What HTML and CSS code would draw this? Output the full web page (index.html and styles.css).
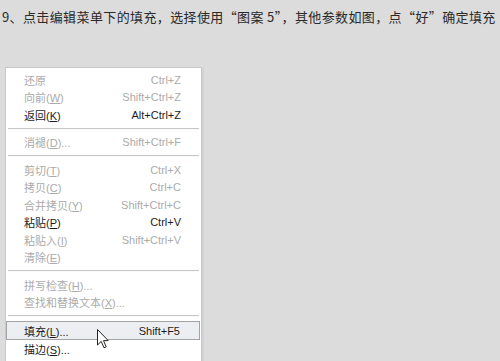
FILE: index.html
```html
<!DOCTYPE html>
<html lang="zh-CN">
<head>
    <meta charset="UTF-8">
    <meta name="viewport" content="width=device-width, initial-scale=1.0">
    <title>填充</title>
    <link rel="stylesheet" href="styles.css">
</head>
<body>
    <p class="step">9、点击编辑菜单下的填充，选择使用“图案 5”，其他参数如图，点“好”确定填充</p>

    <div class="menu">
        <div class="item off"><span>还原</span><span class="key">Ctrl+Z</span></div>
        <div class="item off"><span>向前(<u>W</u>)</span><span class="key">Shift+Ctrl+Z</span></div>
        <div class="item"><span>返回(<u>K</u>)</span><span class="key">Alt+Ctrl+Z</span></div>
        <div class="sep"></div>
        <div class="item off"><span>消褪(<u>D</u>)...</span><span class="key">Shift+Ctrl+F</span></div>
        <div class="sep"></div>
        <div class="item off"><span>剪切(<u>T</u>)</span><span class="key">Ctrl+X</span></div>
        <div class="item off"><span>拷贝(<u>C</u>)</span><span class="key">Ctrl+C</span></div>
        <div class="item off"><span>合并拷贝(<u>Y</u>)</span><span class="key">Shift+Ctrl+C</span></div>
        <div class="item"><span>粘贴(<u>P</u>)</span><span class="key">Ctrl+V</span></div>
        <div class="item off"><span>粘贴入(<u>I</u>)</span><span class="key">Shift+Ctrl+V</span></div>
        <div class="item off"><span>清除(<u>E</u>)</span><span class="key"></span></div>
        <div class="sep"></div>
        <div class="item off"><span>拼写检查(<u>H</u>)...</span><span class="key"></span></div>
        <div class="item off"><span>查找和替换文本(<u>X</u>)...</span><span class="key"></span></div>
        <div class="sep"></div>
        <div class="item active">
            <span>填充(<u>L</u>)...</span><span class="key">Shift+F5</span>
            <svg class="cursor" width="12" height="20" viewBox="0 0 12 20">
                <path d="M0.5 0.5 L0.5 16 L4.2 12.4 L7 18.8 L9.2 17.8 L6.5 11.6 L11.2 11.6 Z" fill="#fff" stroke="#222" stroke-width="1" stroke-linejoin="round"/>
            </svg>
        </div>
        <div class="item"><span>描边(<u>S</u>)...</span><span class="key"></span></div>
        <div class="sep"></div>
    </div>
</body>
</html>
```

FILE: styles.css
```css
html, body {
    height: 100%;
}
body {
    margin: 0;
    overflow: hidden;
    background-color: #dcdcdc;
    font-family: "Liberation Sans", "Noto Sans CJK SC", sans-serif;
}
.step {
    margin: 0;
    padding: 9px 0 0 2px;
    font-family: "Noto Sans CJK SC", sans-serif;
    font-size: 13px;
    line-height: 16px;
    color: #2a2a2a;
    white-space: nowrap;
    letter-spacing: 0.38px;
}
.menu {
    width: 197px;
    box-sizing: border-box;
    margin: 42px 0 0 5px;
    padding: 3px 0 20px;
    background-color: #fff;
    border: 1px solid #c9c9c9;
    box-shadow: 2px 1px 0 #d2d2d2;
}
.item {
    position: relative;
    display: flex;
    justify-content: space-between;
    align-items: center;
    height: 17.5px;
    padding: 0 20px 0 18px;
    font-size: 11px;
    color: #1c1c1c;
}
.item u {
    text-underline-offset: 1px;
}
.off {
    color: #ababab;
}
.active {
    height: 17px;
    margin: 0 1px 0 0;
    padding: 0 19px 0 17px;
    background-color: #eceef2;
    border: 1px solid #a4a4a4;
}
.sep {
    margin: 4px 2px 4px 2px;
    height: 1px;
    background-color: #c6c6c6;
    border-bottom: 1px solid #fafafa;
}
.cursor {
    position: absolute;
    left: 90px;
    top: 7px;
}
```
